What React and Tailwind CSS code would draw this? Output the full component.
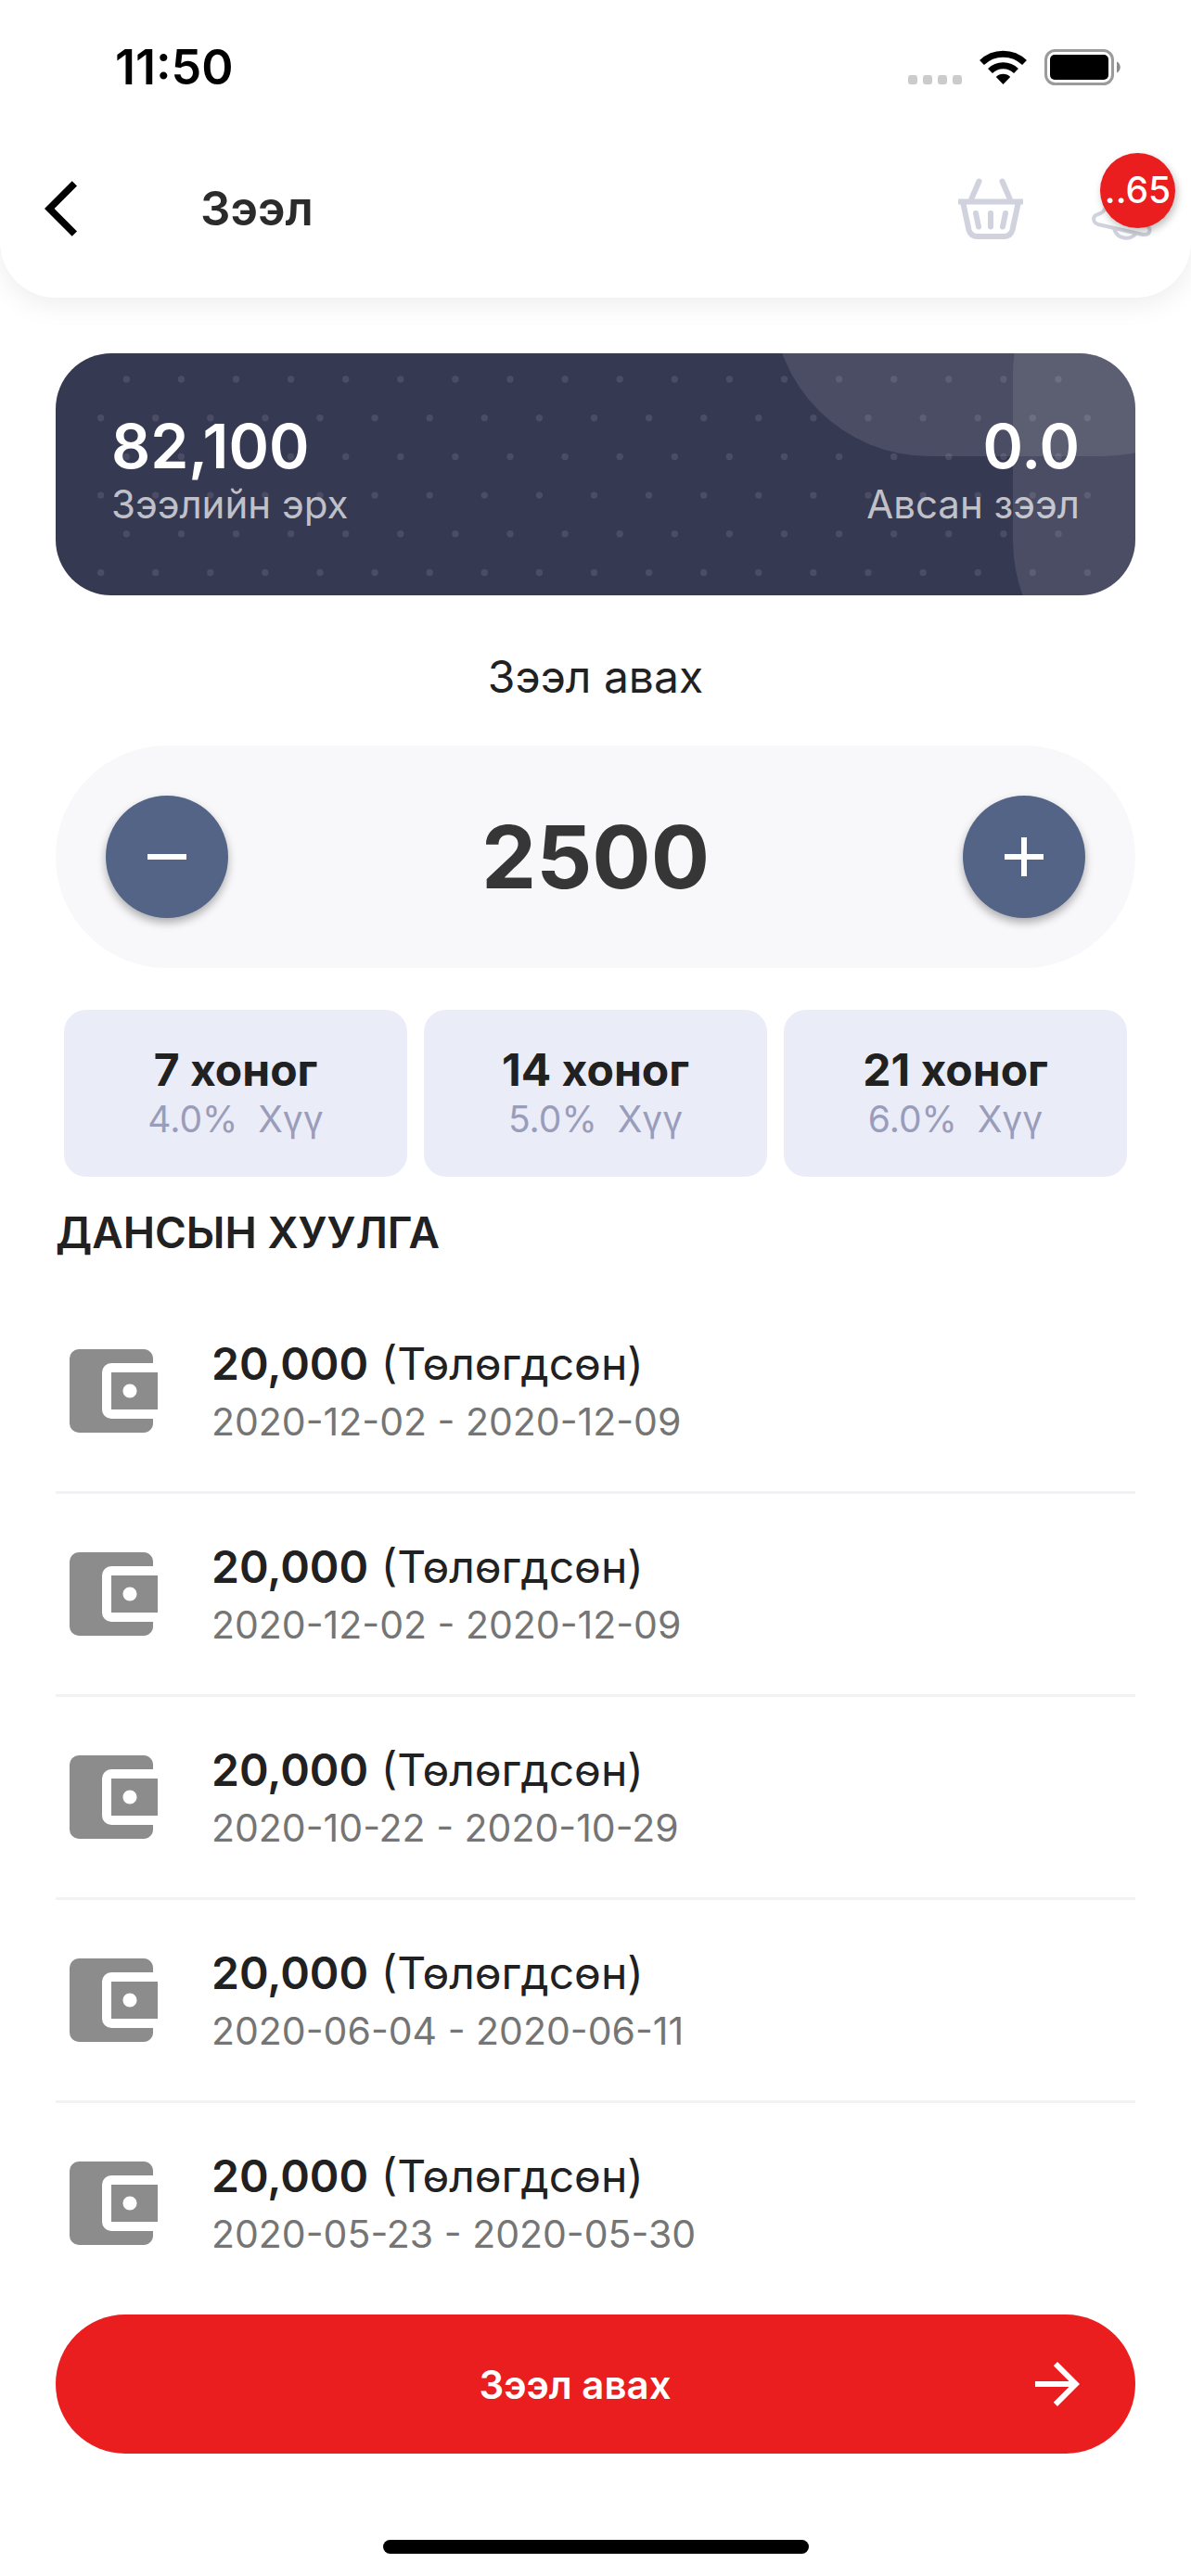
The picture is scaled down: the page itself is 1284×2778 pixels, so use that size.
import { useState } from "react";
import {
  MdAccountBalanceWallet,
  MdAdd,
  MdArrowBackIos,
  MdArrowForward,
  MdRemove,
} from "react-icons/md";

const TERMS = [
  { days: 7, rate: "4.0%" },
  { days: 14, rate: "5.0%" },
  { days: 21, rate: "6.0%" },
];

const HISTORY = [
  { id: 1, amount: "20,000", from: "2020-12-02", to: "2020-12-09" },
  { id: 2, amount: "20,000", from: "2020-12-02", to: "2020-12-09" },
  { id: 3, amount: "20,000", from: "2020-10-22", to: "2020-10-29" },
  { id: 4, amount: "20,000", from: "2020-06-04", to: "2020-06-11" },
  { id: 5, amount: "20,000", from: "2020-05-23", to: "2020-05-30" },
];

// Staggered dot grid on the balance card
const DOTS = [0, 1, 2, 3, 4, 5].flatMap((row) => {
  const even = row % 2 === 0;
  return Array.from({ length: even ? 18 : 19 }, (_, i) => ({
    key: `${row}-${i}`,
    cx: (even ? 76.3 : 48.6) + i * 59.1,
    cy: 28 + row * 41.7,
  }));
});

function StatusBar() {
  return (
    <div className="flex h-[146px] items-center justify-between pl-[124px] pr-[76px]">
      <span className="text-[52px] leading-[60px] font-semibold text-black">11:50</span>
      <svg className="h-10 w-[229px]" viewBox="0 0 229 40" aria-hidden="true">
        <g fill="#cbcbcb">
          <rect x="0" y="28" width="10" height="10" rx="3" />
          <rect x="16" y="28" width="10" height="10" rx="3" />
          <rect x="32" y="28" width="10" height="10" rx="3" />
          <rect x="48" y="28" width="10" height="10" rx="3" />
        </g>
        <g fill="none" stroke="#000" strokeWidth="7">
          <path d="M79.5 14.5A33 33 0 0 1 125.5 14.5" />
          <path d="M88.5 23.5A20 20 0 0 1 116.5 23.5" />
        </g>
        <path d="M102.5 38l-7.7 -8a11 11 0 0 1 15.4 0z" fill="#000" />
        <rect x="148.5" y="1.5" width="72" height="36" rx="10" fill="none" stroke="#9b9b9b" strokeWidth="3" />
        <rect x="153" y="6" width="63" height="27" rx="5" fill="#000" />
        <path d="M225 13.5c5 2 5 10 0 12z" fill="#8b8b8b" />
      </svg>
    </div>
  );
}

function BasketIcon() {
  return (
    <svg className="h-[67px] w-[70px]" viewBox="0 0 70 67" fill="none" stroke="#d0d2dd" strokeWidth="6" aria-hidden="true">
      <path d="M22.5 3.5L14.5 22M47.5 3.5L55.5 22" strokeLinecap="round" />
      <path d="M0 25.5H70" />
      <path d="M5 25.5L11.5 56Q13.5 63 21 63H49Q56.5 63 58.5 56L65 25.5" />
      <path d="M19 38L22 52.5M35 38V52.5M51 38L48 52.5" strokeLinecap="round" />
    </svg>
  );
}

function BellIcon() {
  return (
    <svg className="h-[72px] w-[72px]" viewBox="0 0 72 72" fill="none" stroke="#d0d2dd" strokeWidth="4" strokeLinejoin="round" aria-hidden="true">
      <path d="M22 20C20 33 19 40 11 42C4 44 5 51 11 53L59 64C67 65 69 58 63 54C58 49 62 42 64 32" />
      <path d="M28 57C31 70 47 70 51 63" />
      <path d="M22 20C26 4 58 8 64 32" />
    </svg>
  );
}

function Header() {
  return (
    <header className="rounded-b-[60px] bg-white shadow-[0_6px_30px_rgba(0,0,0,0.08)]">
      <StatusBar />
      <div className="flex h-[175px] items-start pr-[36px] pl-12 pt-[39px]">
        <button type="button" aria-label="Буцах" className="flex h-20 w-[168px] items-center">
          <MdArrowBackIos className="size-[72px] text-black" />
        </button>
        <h1 className="flex-1 text-[51px] leading-[80px] font-semibold text-[#2b2b2b]">Зээл</h1>
        <button type="button" aria-label="Сагс" className="mr-[70px] flex h-20 items-center">
          <BasketIcon />
        </button>
        <button type="button" aria-label="Мэдэгдэл" className="relative flex h-20 w-[75px] items-center">
          <BellIcon />
          <span className="absolute -top-[20px] -right-[19px] flex size-[81px] items-center justify-center rounded-full bg-[#ea1d1f] text-[39px] font-medium text-white shadow-[2px_4px_8px_rgba(0,0,0,0.25)]">
            ..65
          </span>
        </button>
      </div>
    </header>
  );
}

function BalanceCard() {
  return (
    <section className="relative overflow-hidden rounded-[60px] bg-[#363952]">
      <svg
        className="absolute inset-0 h-full w-full"
        viewBox="0 0 1164 261"
        preserveAspectRatio="xMaxYMid slice"
        fill="#fff"
        aria-hidden="true"
      >
        <rect x="773" y="-320" width="525" height="431" rx="169" fillOpacity="0.1" />
        <rect x="1032" y="-147" width="400" height="518" rx="169" fillOpacity="0.1" />
        <g fillOpacity="0.1">
          {DOTS.map((dot) => (
            <circle key={dot.key} cx={dot.cx} cy={dot.cy} r="3.7" />
          ))}
        </g>
      </svg>
      <div className="relative flex justify-between px-[60px] pt-16 pb-[71px]">
        <div>
          <p className="text-[66px] leading-[72px] font-semibold text-white">82,100</p>
          <p className="text-[42px] leading-[54px] text-white/70">Зээлийн эрх</p>
        </div>
        <div className="text-right">
          <p className="text-[66px] leading-[72px] font-semibold text-white">0.0</p>
          <p className="text-[42px] leading-[54px] text-white/70">Авсан зээл</p>
        </div>
      </div>
    </section>
  );
}

function StepButton({ label, onClick, children }) {
  return (
    <button
      type="button"
      aria-label={label}
      onClick={onClick}
      className="flex size-[132px] shrink-0 items-center justify-center rounded-full bg-[#536486] text-white shadow-[0_5px_10px_rgba(0,0,0,0.3)]"
    >
      {children}
    </button>
  );
}

function HistoryItem({ item }) {
  return (
    <li className="flex h-[219px] items-center gap-12 border-b-[3px] border-[#f1f2f6] last:border-transparent">
      <MdAccountBalanceWallet className="size-[120px] shrink-0 text-[#8c8c8c]" />
      <div className="pt-1">
        <p className="text-[48px] leading-[62px] text-[#212121]">
          <span className="font-semibold">{item.amount}</span> (Төлөгдсөн)
        </p>
        <p className="text-[41px] leading-[62px] text-[#757575]">
          {item.from} - {item.to}
        </p>
      </div>
    </li>
  );
}

export default function App() {
  const [amount, setAmount] = useState(2500);

  return (
    <div className="flex min-h-screen flex-col bg-white font-['Inter','Noto_Sans',sans-serif] text-[#212121]">
      <Header />

      <main className="flex-1 px-[60px] pt-[60px]">
        <BalanceCard />

        <label htmlFor="amount" className="mt-[52px] block text-center text-[48px] leading-[72px]">
          Зээл авах
        </label>
        <div className="mt-[38px] flex h-[240px] items-center justify-between rounded-full bg-[#f8f8fb] px-[54px]">
          <StepButton label="Хасах" onClick={() => setAmount(Math.max(0, amount - 500))}>
            <MdRemove className="size-[72px]" />
          </StepButton>
          <input
            id="amount"
            inputMode="numeric"
            value={amount}
            onChange={(e) => setAmount(Number(e.target.value) || 0)}
            className="w-full min-w-0 bg-transparent text-center text-[94px] leading-[120px] font-bold text-[#363636] outline-none"
          />
          <StepButton label="Нэмэх" onClick={() => setAmount(amount + 500)}>
            <MdAdd className="size-[72px]" />
          </StepButton>
        </div>

        <div className="mt-[45px] grid grid-cols-3 gap-[18px] px-[9px]">
          {TERMS.map((term) => (
            <button
              key={term.days}
              type="button"
              className="flex h-[180px] flex-col items-center justify-center rounded-3xl bg-[#eaecf8]"
            >
              <span className="text-[48px] leading-[54px] font-bold">{term.days} хоног</span>
              <span className="text-[39px] leading-[51px] whitespace-pre text-[#9a9dba]">
                {term.rate}{"  "}Хүү
              </span>
            </button>
          ))}
        </div>

        <h2 className="mt-[30px] text-[46px] leading-[60px] font-semibold">ДАНСЫН ХУУЛГА</h2>
        <ul className="mt-[33px]">
          {HISTORY.map((item) => (
            <HistoryItem key={item.id} item={item} />
          ))}
        </ul>
      </main>

      <footer className="px-[60px] pt-[9px] pb-6">
        <button
          type="button"
          className="flex h-[150px] w-full items-center rounded-full bg-[#ea1d1f] pr-12 pl-[76px] text-[42px] font-semibold text-white"
        >
          <span className="flex-1 text-center">Зээл авах</span>
          <MdArrowForward className="size-[72px]" />
        </button>
        <div className="mx-auto mt-[93px] h-[15px] w-[459px] rounded-full bg-black" />
      </footer>
    </div>
  );
}
